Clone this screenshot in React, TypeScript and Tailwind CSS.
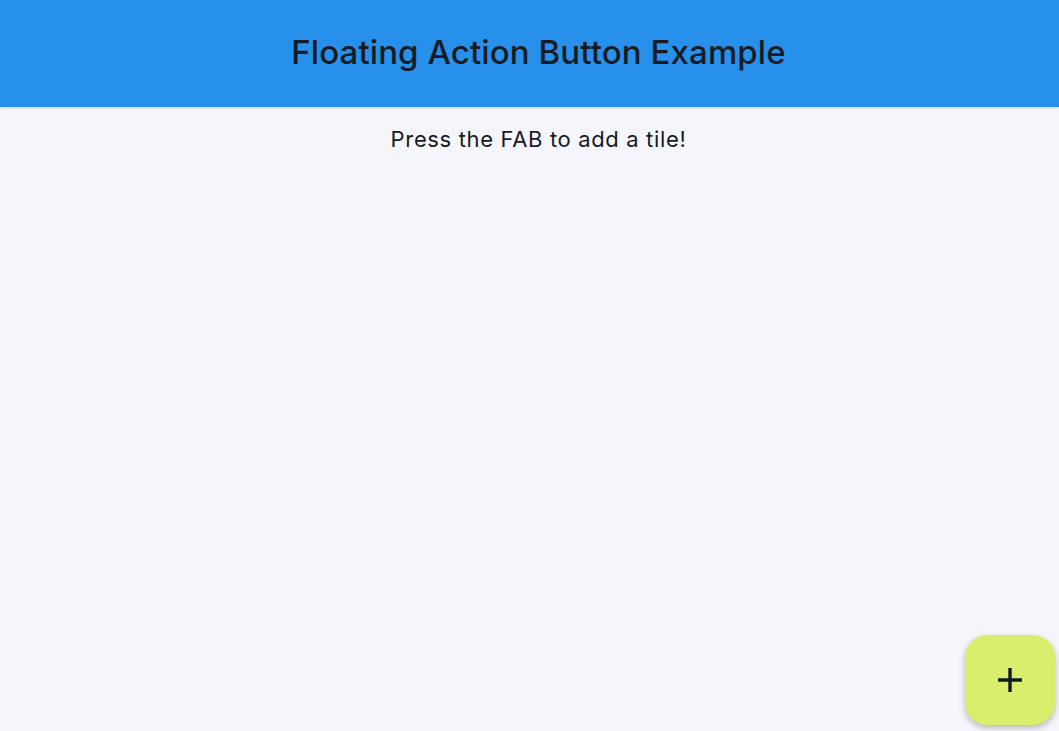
import React from "react";

export default function App() {
  return (
    <div className="relative h-[731px] w-[1059px] overflow-hidden bg-[#f5f6fb] font-['Inter',sans-serif]">
      <header className="flex h-[107px] items-center justify-center bg-[#2790eb] pb-[2px] pl-[18px] shadow-[0_1px_2px_rgba(0,0,0,0.12)]">
        <h1 className="text-[33px] font-medium tracking-[0.1px] text-[#171c24]">Floating Action Button Example</h1>
      </header>
      <p className="mt-[16px] pl-[18px] text-center text-[22px] tracking-[0.65px] text-[#171c24]">Press the FAB to add a tile!</p>
      <button className="absolute left-[965px] top-[635px] flex h-[90px] w-[90px] items-center justify-center rounded-[22px] bg-[#daee6e] shadow-[0_3px_6px_rgba(0,0,0,0.25)]">
        <svg width="24" height="24" viewBox="0 0 24 24">
          <path d="M12 0v24M0 12h24" stroke="#0f1a24" strokeWidth="3.4" />
        </svg>
      </button>
    </div>
  );
}
